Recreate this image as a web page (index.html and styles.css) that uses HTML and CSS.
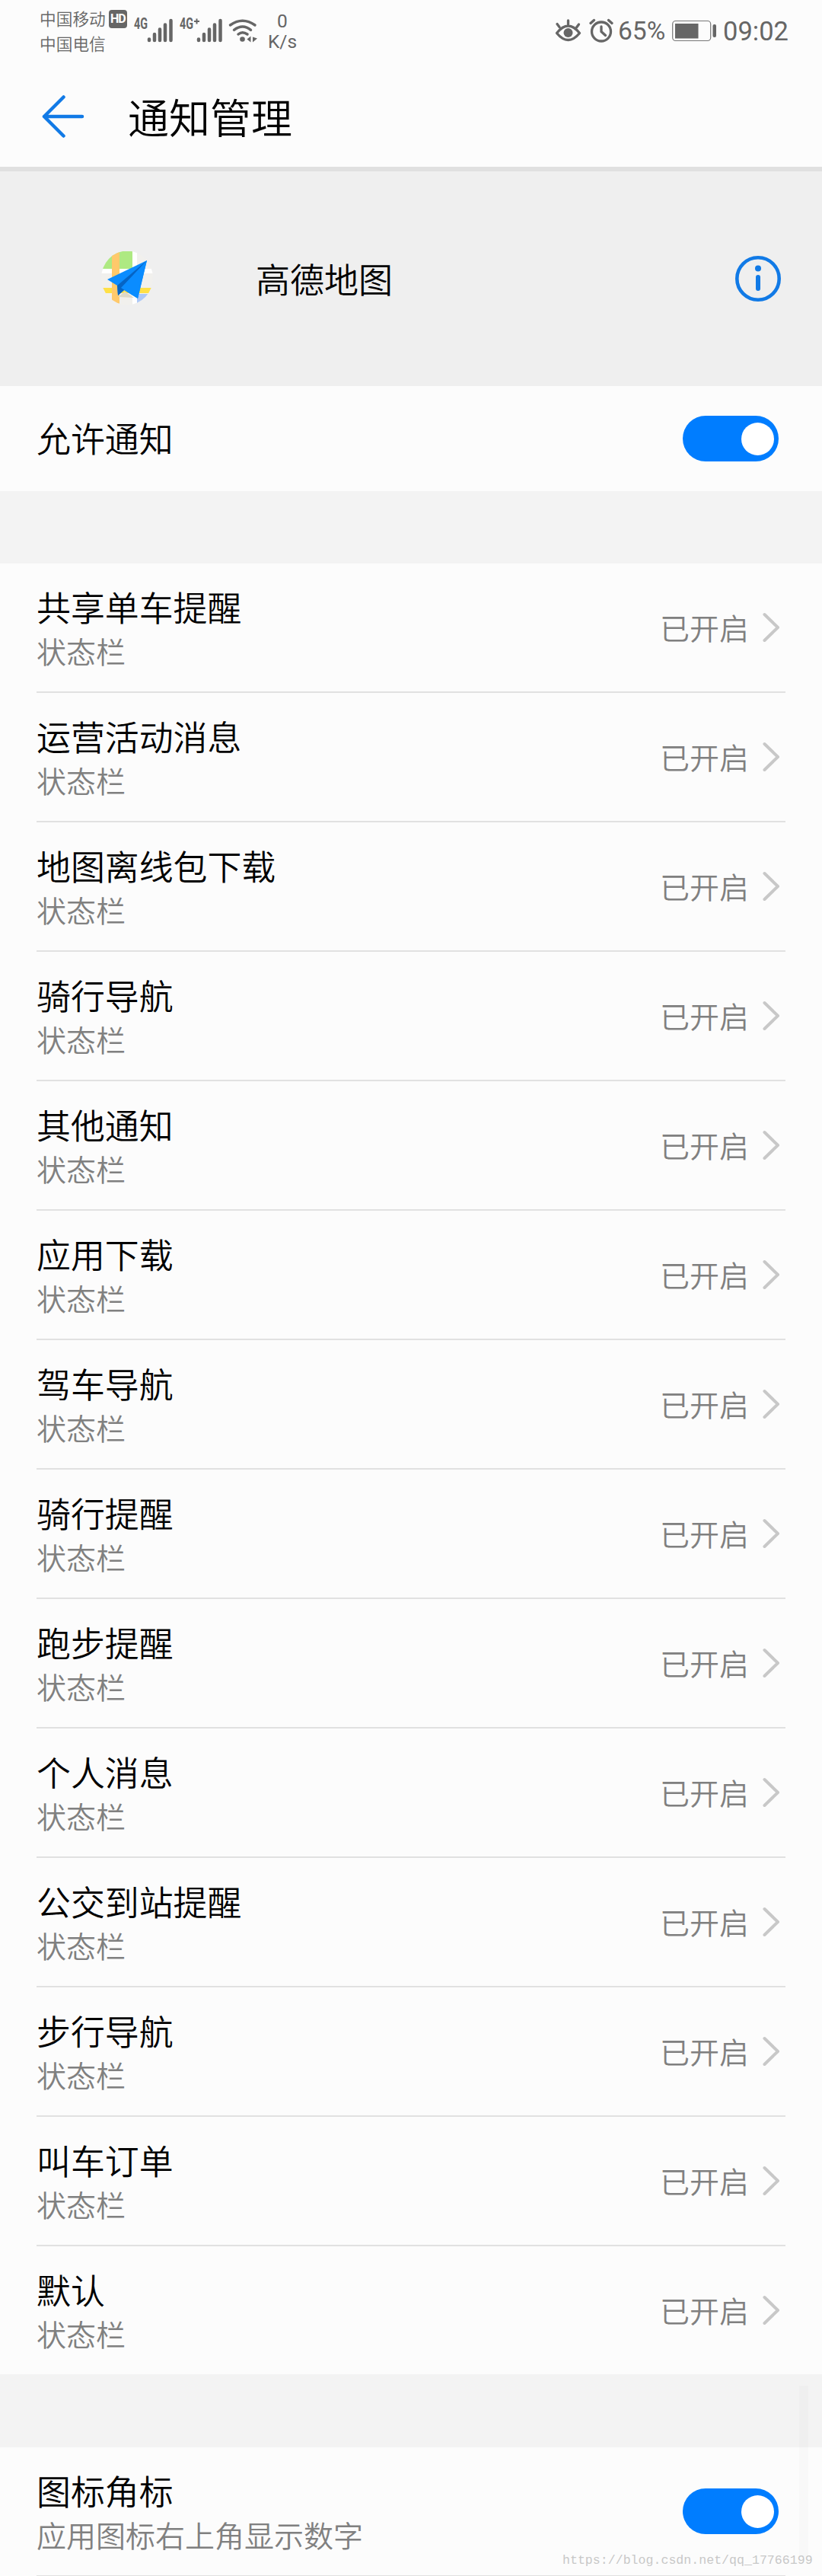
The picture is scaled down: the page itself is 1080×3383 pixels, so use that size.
FILE: index.html
```html
<!DOCTYPE html>
<html lang="zh-CN">
<head>
<meta charset="utf-8">
<title>通知管理</title>
<link rel="stylesheet" href="styles.css">
</head>
<body>
<header class="top">
  <div class="status">
    <div class="carriers">
      <div class="carrier">中国移动<span class="hd">HD</span></div>
      <div class="carrier">中国电信</div>
    </div>
    <svg class="radio" width="164" height="48" viewBox="175 10 164 48">
      <g class="net"><text x="176" y="38.300" textLength="18" lengthAdjust="spacingAndGlyphs">4G</text><text x="236" y="38.300" textLength="18" lengthAdjust="spacingAndGlyphs">4G</text></g>
      <path d="M255 28h7M258.500 24.500v7" stroke="#666" stroke-width="2"/>
      <g class="bars"><path d="M196 51.500v1.500M203 45v8M210 38.500v14.500M217 32.500v20.500M224.500 27v26"/><path d="M261 51.500v1.500M268 45v8M275 38.500v14.500M282 32.500v20.500M289.500 27v26"/></g>
      <g class="wifi"><path d="M302.500 33q16-11.500 32.500 0M307.500 39.300q11.500-8.500 22 0M313 45q5.500-4.500 12 0"/></g>
      <circle cx="318.500" cy="51.500" r="3.300" fill="#666"/>
      <path d="M324.500 51.500l5-4v8zM332 48.500l6 2-6 5z" fill="#666"/>
    </svg>
    <div class="speed"><span>0</span><span>K/s</span></div>
    <svg class="eye" width="36" height="32" viewBox="729 24 36 32"><path d="M731.500 43.500q15-19 30 0q-15 18-30 0zM746.500 27v5M732 31.500l3 4M760.500 32l-3 4" class="line"/><circle cx="746.500" cy="43" r="6" fill="#666"/></svg>
    <svg class="alarm" width="32" height="32" viewBox="774 24 32 32"><circle cx="790" cy="41.500" r="12.500" class="line"/><path d="M790 35v6.500l5.500 5M776 30.500l4.500-4M804 30.500l-4.500-4" class="line"/></svg>
    <div class="percent">65%</div>
    <svg class="battery" width="60" height="30" viewBox="882 26 60 30"><rect x="883.700" y="27.500" width="50" height="26" rx="4" fill="none" stroke="#777" stroke-width="1.200"/><rect x="887" y="31" width="30.500" height="19.500" fill="#666"/><rect x="936.500" y="32" width="4.500" height="17" rx="2" fill="#666"/></svg>
    <div class="time">09:02</div>
  </div>
  <div class="titlebar">
    <svg width="56" height="56" viewBox="55 125 56 56"><path d="M83.500 127.500L58 153l25.500 25.500M58 153h50" fill="none" stroke="#117ae6" stroke-width="4.500" stroke-linecap="round" stroke-linejoin="round"/></svg>
    <h1>通知管理</h1>
  </div>
</header>
<section class="app">
  <svg class="logo" width="70" height="72" viewBox="0 0 70 72">
    <defs><clipPath id="disc"><ellipse cx="34" cy="35" rx="34" ry="35.500"/></clipPath></defs>
    <g clip-path="url(#disc)">
      <path d="M0 0h70v72H0z" fill="#f1f0ed"/>
      <path d="M0 0h41v23H0z" fill="#aee982"/>
      <path d="M41 0h6v72h-6zM0 23h70v6H0z" fill="#fff"/>
      <path d="M47 56h23v16H47z" fill="#abc8f8"/>
      <path d="M0 48h70v7H0z" fill="#ffe046"/>
      <path d="M14 0h10v72H14z" fill="#ffc96b"/>
    </g>
    <path d="M22 60l9-7 12 8z" fill="#ddd8c8"/>
    <path d="M60 12L8 37l13 8 1 13 8-7 18 11z" fill="#0a8cff"/>
    <path d="M60 12L21 45l1 13 8-7z" fill="#0564c4"/>
    <path d="M60 12L26 48l22 14z" fill="#0a8cff"/>
  </svg>
  <span class="name">高德地图</span>
  <svg width="60" height="60" viewBox="0 0 60 60"><circle cx="30" cy="30" r="27.700" fill="none" stroke="#117ae6" stroke-width="4.600"/><circle cx="30" cy="16.500" r="4" fill="#117ae6"/><path d="M30 28v15" stroke="#117ae6" stroke-width="6" stroke-linecap="round"/></svg>
</section>
<section class="allow"><span class="label">允许通知</span><span class="toggle"></span></section>
<div class="gap"></div>
<ul class="list" id="channels"></ul>
<div class="gap last"></div>
<section class="item badge"><div class="copy"><div class="label">图标角标</div><div class="sub">应用图标右上角显示数字</div></div><span class="toggle"></span></section>
<div class="scrollbar"></div>
<div class="watermark">https://blog.csdn.net/qq_17766199</div>
<script src="list.js"></script>
</body>
</html>
```
FILE: styles.css
```css
* { box-sizing: border-box; margin: 0; padding: 0; }
body { position: relative; width: 1080px; height: 3383px; overflow: hidden; background: #fcfcfc; color: #000; font-family: "Noto Sans CJK SC", sans-serif; font-weight: 350; }
svg { display: block; flex: none; }
.top { height: 225px; border-bottom: 6px solid #e0e0e0; }
.status { display: flex; height: 84px; align-items: flex-start; color: #666; font-family: Roboto, "Noto Sans CJK SC", sans-serif; font-weight: 400; white-space: nowrap; }
.carriers { width: 123px; margin: 7px 0 0 52px; font: 350 21.700px/33px "Noto Sans CJK SC", sans-serif; }
.carrier { display: flex; height: 33px; }
.hd { width: 24px; height: 24px; margin: 6px 0 0 4px; border-radius: 4px; background: #666; color: #fff; font: bold 16px/24px Roboto, sans-serif; text-align: center; letter-spacing: -1px; }
.radio { margin-top: 10px; }
.net { font: bold 19.500px Roboto, sans-serif; fill: #666; }
.bars { stroke: #666; stroke-width: 4.500; stroke-linecap: round; }
.wifi { fill: none; stroke: #666; stroke-width: 3.500; stroke-linecap: round; }
.speed { display: flex; flex-direction: column; width: 36px; margin: 14px 0 0 14px; align-items: center; font-size: 24.500px; line-height: 27px; }
.eye { margin: 24px 0 0 340px; }
.line { fill: none; stroke: #666; stroke-width: 3.300; stroke-linecap: round; stroke-linejoin: round; }
.alarm { margin: 24px 0 0 9px; }
.percent { width: 70px; margin: 20px 0 0 6px; font-size: 33.500px; line-height: 42px; }
.battery { margin-top: 26px; }
.time { margin: 20px 0 0 8px; font-size: 34.500px; line-height: 42px; }
.titlebar { display: flex; gap: 57px; padding: 41px 0 0 55px; }
h1 { font-size: 54px; font-weight: 350; line-height: 56px; }
.app { display: flex; align-items: center; height: 282px; padding: 0 54px 0 133px; background: #efefef; }
.name { flex: 1; margin: -1px 0 0 133px; font-size: 45px; line-height: 60px; }
.allow { display: flex; justify-content: space-between; align-items: center; height: 138px; padding: 0 57px 0 48px; }
.allow .label { margin-top: -2px; }
.label { font-size: 44.900px; line-height: 60px; }
.sub { font-size: 39px; line-height: 54px; color: #808080; }
.toggle { display: flex; flex: none; justify-content: flex-end; align-items: center; width: 126px; height: 60px; padding-right: 6px; border-radius: 30px; background: #007dff; }
.toggle::after { content: ""; width: 43px; height: 43px; border-radius: 50%; background: #fff; }
.gap { height: 95px; background: #f3f3f3; }
.gap.last { height: 96px; }
.list { list-style: none; }
.item { display: flex; justify-content: space-between; height: 170px; margin: 0 48px; border-bottom: 2px solid #e1e1e1; }
.list .item:last-child { height: 168px; border-bottom: 0; }
.copy { padding-top: 27px; }
.state { display: flex; align-items: center; gap: 17px; height: 168px; padding-right: 7px; color: #808080; font-size: 39px; line-height: 54px; }
.state span { margin-top: -3px; }
.badge .toggle { margin: 54px 9px 0 0; }
.scrollbar { position: absolute; left: 1050px; top: 3133px; width: 12px; height: 225px; background: rgba(0, 0, 0, .015); }
.watermark { position: absolute; left: 739px; top: 3352px; font: 16.600px/22px "Liberation Mono", monospace; color: #c8c8c8; white-space: nowrap; }
```
FILE: list.js
```js
const channels = ["共享单车提醒", "运营活动消息", "地图离线包下载", "骑行导航", "其他通知", "应用下载", "驾车导航", "骑行提醒", "跑步提醒", "个人消息", "公交到站提醒", "步行导航", "叫车订单", "默认"];
document.getElementById("channels").innerHTML = channels.map(name => `
  <li class="item">
    <div class="copy"><div class="label">${name}</div><div class="sub">状态栏</div></div>
    <div class="state"><span>已开启</span><svg width="24" height="42" viewBox="0 0 24 42"><path d="M3.500 4L21 21 3.500 38" fill="none" stroke="#c8c8c8" stroke-width="4" stroke-linecap="round" stroke-linejoin="round"/></svg></div>
  </li>`).join("");
```
